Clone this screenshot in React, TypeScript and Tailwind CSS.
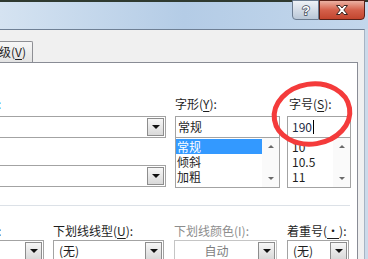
import React from "react";

const F = "font-['Noto_Sans_CJK_SC','Noto_Sans',sans-serif]";

function Arrow() {
  return (
    <div className="w-[17px] h-[18px] border border-[#8d8d8d] bg-gradient-to-b from-[#f7f7f7] to-[#d9d9d9] flex items-center justify-center shrink-0">
      <div className="w-0 h-0 border-l-[4px] border-r-[4px] border-t-[4px] border-l-transparent border-r-transparent border-t-[#111]" />
    </div>
  );
}

function Combo({ cls, children }: { cls: string; children?: React.ReactNode }) {
  return (
    <div className={`h-[22px] border border-[#a3a3a3] bg-white flex items-center justify-between pl-[5px] pr-px ${cls}`}>
      <div className="text-[12px] leading-[16px] text-[#1e1e1e] truncate">{children}</div>
      <Arrow />
    </div>
  );
}

function ScrollBar() {
  return (
    <div className="w-[17px] self-stretch bg-[#fafafa] flex flex-col items-center justify-between py-[7px]">
      <div className="w-0 h-0 border-l-[3px] border-r-[3px] border-b-[3px] border-l-transparent border-r-transparent border-b-[#6a6a6a]" />
      <div className="w-0 h-0 border-l-[3px] border-r-[3px] border-t-[3px] border-l-transparent border-r-transparent border-t-[#6a6a6a]" />
    </div>
  );
}

function Label({ children, cls = "" }: { children: React.ReactNode; cls?: string }) {
  return <div className={`h-[16px] text-[12px] leading-[16px] text-[#1e1e1e] whitespace-nowrap ${cls}`}>{children}</div>;
}

function Item({ children, cls = "" }: { children: React.ReactNode; cls?: string }) {
  return <div className={`h-[15px] text-[12px] leading-[15px] overflow-hidden ${cls}`}>{children}</div>;
}

const U = ({ c }: { c: string }) => <span className="underline underline-offset-[2px]">{c}</span>;

export default function App() {
  return (
    <div className={`w-[368px] h-[259px] overflow-hidden relative bg-[#cbdaea] ${F}`}>
      {/* title bar */}
      <div className="h-[29px] border-t-2 border-[#2f3a30] bg-gradient-to-r from-[#d5e3f1] via-[#b4cce6] to-[#c3d7ec] flex justify-end pr-[3px]">
        <div className="-mt-[2px] h-[20px] w-[27px] border border-[#6b7c91] rounded-bl-[4px] bg-gradient-to-b from-[#eef2f7] via-[#d3dce7] to-[#b9c7d7] flex items-center justify-center">
          <svg width="12" height="14" viewBox="0 0 12 14">
            <text x="6" y="12" textAnchor="middle" fontSize="13" fontWeight="700" fontFamily="Liberation Sans, sans-serif" fill="#fff" stroke="#3a4656" strokeWidth="1.4" paintOrder="stroke">?</text>
          </svg>
        </div>
        <div className="-mt-[2px] h-[20px] w-[46px] border border-[#5a2018] rounded-br-[4px] bg-gradient-to-b from-[#eab1a3] via-[#d4604b] to-[#c2452e] flex items-center justify-center">
          <svg width="16" height="12" viewBox="0 0 16 12">
            <path d="M2.5 1.5 H6 L8 4 L10 1.5 H13.5 L9.8 6 L13.5 10.5 H10 L8 8 L6 10.5 H2.5 L6.2 6 Z" fill="#fff" stroke="#3b2420" strokeWidth="1" strokeLinejoin="round" />
          </svg>
        </div>
      </div>

      {/* body */}
      <div className="flex">
        <div className="w-[365px] border-t border-[#6f8095] border-r border-r-[#a7b4c3] bg-[#f0f0f0]">
          {/* tabs */}
          <div className="h-[32px] pt-[11px] flex">
            <div className="h-[21px] w-[33px] border border-b-0 border-l-0 border-[#8e8f94] rounded-tr-[2px] bg-gradient-to-b from-[#f7f7f7] to-[#e3e3e3] flex items-center">
              <span className="text-[12px] leading-[16px] text-[#1e1e1e] -ml-[1px]">级(<U c="V" />)</span>
            </div>
          </div>
          {/* panel */}
          <div className="flex">
            <div className="w-[358px] h-[200px] bg-white border-t border-r border-[#898c95]">
              {/* top section */}
              <div className="flex pt-[33px]">
                <div className="w-[166px] -ml-[2px] flex flex-col">
                  <Label cls="text-[#3a9bf0] pl-0">:</Label>
                  <Combo cls="mt-[4px] w-[168px]" />
                  <Combo cls="mt-[27px] w-[168px]" />
                </div>
                <div className="ml-[11px] w-[105px] flex flex-col">
                  <Label>字形(<U c="Y" />):</Label>
                  <div className="mt-[4px] h-[22px] border border-[#a3a3a3] flex items-center pl-[2px] text-[12px] leading-[16px] text-[#1e1e1e]">常规</div>
                  <div className="h-[50px] border border-t-0 border-[#a3a3a3] flex">
                    <div className="flex-1 pt-px flex flex-col text-[#1e1e1e]">
                      <Item cls="bg-[#3399ff] text-white pl-[1px]">常规</Item>
                      <Item cls="pl-[1px]">倾斜</Item>
                      <Item cls="pl-[1px]">加粗</Item>
                    </div>
                    <ScrollBar />
                  </div>
                </div>
                <div className="ml-[7px] w-[64px] flex flex-col">
                  <Label cls="pl-[2px]">字号(<U c="S" />):</Label>
                  <div className="mt-[4px] h-[22px] border border-[#a3a3a3] flex items-center pl-[4px] text-[12px] leading-[16px] text-[#1b2a44]">
                    190<span className="ml-[1px] w-px h-[14px] bg-black" />
                  </div>
                  <div className="h-[50px] border border-t-0 border-[#a3a3a3] flex">
                    <div className="flex-1 pt-px flex flex-col text-[#1e1e1e] pl-[4px]">
                      <Item>10</Item>
                      <Item>10.5</Item>
                      <Item>11</Item>
                    </div>
                    <ScrollBar />
                  </div>
                </div>
              </div>
              {/* separator */}
              <div className="mt-[17px] w-[350px] h-px bg-[#dce1e7]" />
              {/* bottom section */}
              <div className="flex mt-[17px]">
                <div className="w-[44px] -ml-[2px] flex flex-col">
                  <Label>:</Label>
                  <Combo cls="mt-px w-[46px]" />
                </div>
                <div className="ml-[11px] w-[111px] flex flex-col">
                  <Label>下划线线型(<U c="U" />):</Label>
                  <Combo cls="mt-px w-[111px]">(无)</Combo>
                </div>
                <div className="ml-[10px] w-[103px] flex flex-col">
                  <Label cls="text-[#8d8d8d]">下划线颜色(I):</Label>
                  <div className="mt-px h-[22px] w-[103px] border border-[#c5c5c5] bg-white flex items-center pr-px">
                    <div className="flex-1 text-center text-[12px] leading-[16px] text-[#7d7d7d]">自动</div>
                    <Arrow />
                  </div>
                </div>
                <div className="ml-[10px] w-[62px] flex flex-col">
                  <Label>着重号(<U c="·" />):</Label>
                  <Combo cls="mt-px w-[62px] pl-[3px]">(无)</Combo>
                </div>
              </div>
            </div>
          </div>
        </div>
      </div>

      {/* red hand-drawn circle */}
      <svg className="absolute left-[265px] top-[76px]" width="96" height="80" viewBox="0 0 96 80">
        <ellipse cx="47" cy="38" rx="38" ry="30" fill="none" stroke="#f43b3b" strokeWidth="5" transform="rotate(-9 47 38)" />
      </svg>
    </div>
  );
}
